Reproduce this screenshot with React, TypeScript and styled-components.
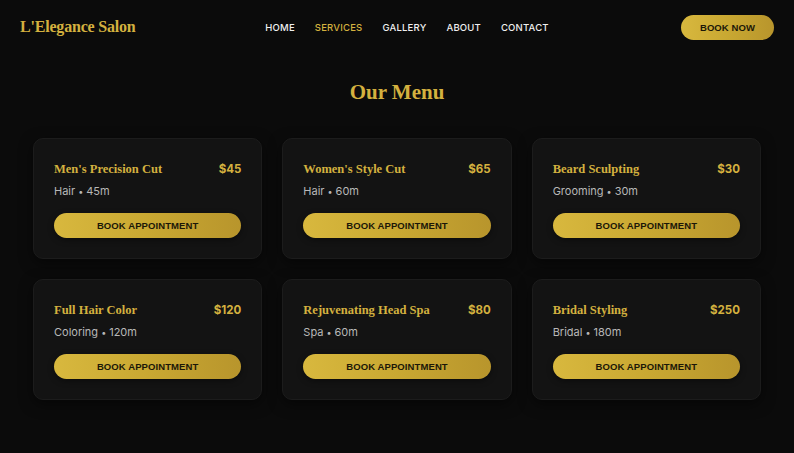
import styled, { createGlobalStyle } from "styled-components";

interface Service {
    name: string;
    price: string;
    category: string;
    duration: string;
}

const SERVICES: Service[] = [
    { name: "Men's Precision Cut", price: "$45", category: "Hair", duration: "45m" },
    { name: "Women's Style Cut", price: "$65", category: "Hair", duration: "60m" },
    { name: "Beard Sculpting", price: "$30", category: "Grooming", duration: "30m" },
    { name: "Full Hair Color", price: "$120", category: "Coloring", duration: "120m" },
    { name: "Rejuvenating Head Spa", price: "$80", category: "Spa", duration: "60m" },
    { name: "Bridal Styling", price: "$250", category: "Bridal", duration: "180m" },
];

const NAV_LINKS = ["HOME", "SERVICES", "GALLERY", "ABOUT", "CONTACT"];

const GOLD = "#d4b13f";
const GOLD_GRADIENT = "linear-gradient(90deg, #d8b83e 0%, #c9a832 50%, #b8952c 100%)";
const SERIF = `"Liberation Serif", "DejaVu Serif", serif`;

const GlobalStyle = createGlobalStyle`
    * {
        box-sizing: border-box;
    }

    body {
        margin: 0;
        background: #0b0b0b;
        font-family: Inter, "Noto Sans", sans-serif;
        color: #e8e8e8;
    }
`;

const Page = styled.div`
    min-height: 453px;
    background: #0b0b0b;
`;

const Header = styled.header`
    height: 54px;
    padding: 0 20px;
    display: grid;
    grid-template-columns: 1fr auto 1fr;
    align-items: center;
`;

const Logo = styled.div`
    font-family: ${SERIF};
    font-weight: 700;
    font-size: 16px;
    color: ${GOLD};
    letter-spacing: -0.2px;
`;

const Nav = styled.nav`
    display: flex;
    gap: 20px;
    padding-left: 20px;
`;

const NavLink = styled.a<{ $active?: boolean }>`
    font-size: 9.5px;
    font-weight: 500;
    letter-spacing: 0.2px;
    color: ${({ $active }) => ($active ? GOLD : "#f0f0f0")};
    text-decoration: none;
    cursor: pointer;
`;

const HeaderActions = styled.div`
    display: flex;
    justify-content: flex-end;
`;

const PillButton = styled.button`
    border: none;
    border-radius: 999px;
    background: ${GOLD_GRADIENT};
    color: #1b1708;
    font-family: "Liberation Sans", Arial, sans-serif;
    font-weight: 700;
    font-size: 9.5px;
    letter-spacing: 0.1px;
    cursor: pointer;
`;

const BookNow = styled(PillButton)`
    width: 93px;
    height: 25px;
`;

const Section = styled.section`
    width: 728px;
    margin: 0 auto;
    padding-top: 24px;
`;

const Title = styled.h1`
    margin: 0 0 32px;
    text-align: center;
    font-family: ${SERIF};
    font-weight: 700;
    font-size: 21px;
    line-height: 28px;
    color: ${GOLD};
`;

const Grid = styled.div`
    display: grid;
    grid-template-columns: repeat(3, 1fr);
    gap: 20px;
`;

const Card = styled.div`
    height: 121px;
    padding: 20px 20px 0;
    background: #131313;
    border: 1px solid #1c1c1c;
    border-radius: 10px;
    box-shadow: 0 4px 14px rgba(0, 0, 0, 0.5);
    display: flex;
    flex-direction: column;
`;

const CardTop = styled.div`
    display: flex;
    justify-content: space-between;
    align-items: center;
    height: 20px;
`;

const ServiceName = styled.h3`
    margin: 0;
    font-family: ${SERIF};
    font-weight: 700;
    font-size: 12.5px;
    color: ${GOLD};
`;

const Price = styled.span`
    font-weight: 700;
    font-size: 11.5px;
    color: ${GOLD};
`;

const Meta = styled.div`
    margin-top: 4px;
    font-size: 11px;
    line-height: 16px;
    color: #b8b8b8;
`;

const Dot = styled.span`
    margin: 0 3px;
    font-size: 9px;
`;

const BookAppointment = styled(PillButton)`
    margin-top: 13px;
    width: 100%;
    height: 25px;
    box-shadow: 0 2px 6px rgba(0, 0, 0, 0.4);
`;

export default function App() {
    return (
        <Page>
            <GlobalStyle />
            <Header>
                <Logo>L'Elegance Salon</Logo>
                <Nav>
                    {NAV_LINKS.map((link) => (
                        <NavLink key={link} $active={link === "SERVICES"}>
                            {link}
                        </NavLink>
                    ))}
                </Nav>
                <HeaderActions>
                    <BookNow>BOOK NOW</BookNow>
                </HeaderActions>
            </Header>
            <Section>
                <Title>Our Menu</Title>
                <Grid>
                    {SERVICES.map((service) => (
                        <Card key={service.name}>
                            <CardTop>
                                <ServiceName>{service.name}</ServiceName>
                                <Price>{service.price}</Price>
                            </CardTop>
                            <Meta>
                                {service.category}
                                <Dot>•</Dot>
                                {service.duration}
                            </Meta>
                            <BookAppointment>BOOK APPOINTMENT</BookAppointment>
                        </Card>
                    ))}
                </Grid>
            </Section>
        </Page>
    );
}
